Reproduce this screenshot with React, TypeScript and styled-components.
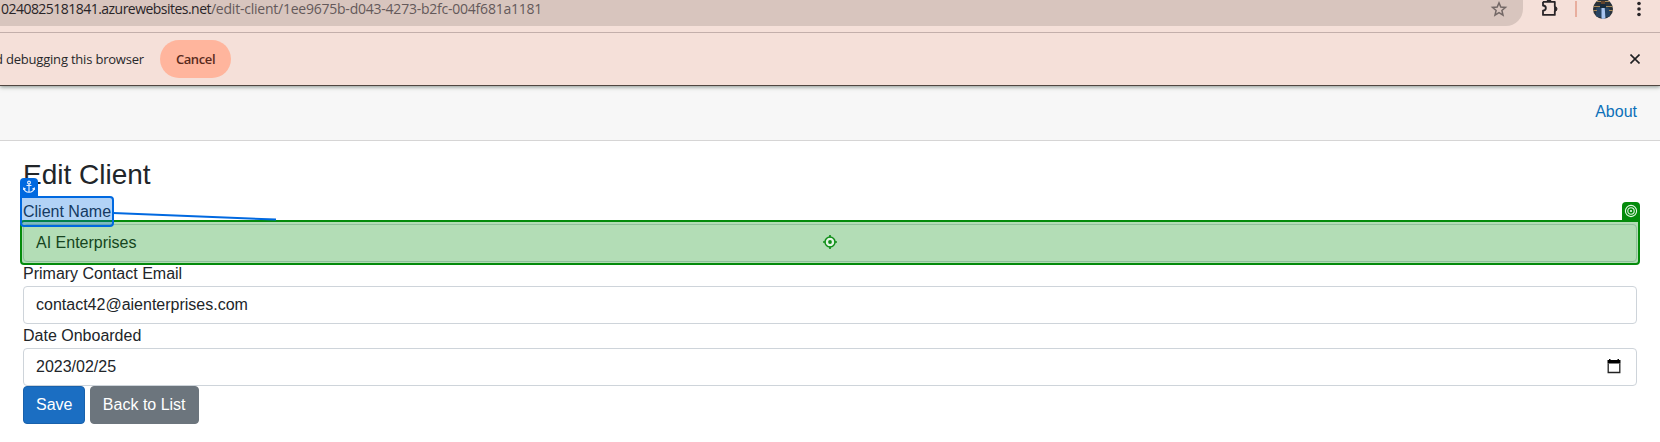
import React from "react";
import styled, { createGlobalStyle, css } from "styled-components";

const GlobalStyle = createGlobalStyle`
  *, *::before, *::after { box-sizing: border-box; }
  body {
    margin: 0;
    background: #fff;
    color: #212529;
    font: 16px/24px "Liberation Sans", Arial, sans-serif;
    overflow: hidden;
  }
`;

const Window = styled.div`
  height: 442px;
  overflow: hidden;
`;

const Toolbar = styled.header`
  display: flex;
  align-items: flex-start;
  height: 33px;
  background: #f5e0d9;
  border-bottom: 1px solid #c3afab;
`;

const AddressBar = styled.div`
  display: flex;
  justify-content: space-between;
  width: 1523px;
  height: 26px;
  padding-right: 15px;
  background: #d8c5be;
  border-bottom-right-radius: 17px;
`;

const Url = styled.span`
  padding-left: 1px;
  font: 14px/18px "Open Sans", "Noto Sans", sans-serif;
  letter-spacing: -0.53px;
  white-space: nowrap;
  color: #282427;
`;

const UrlPath = styled.span`
  color: #64595a;
  letter-spacing: -0.23px;
`;

const Icon = styled.svg`
  display: block;
  flex: none;
`;

const Actions = styled.div`
  display: flex;
  flex: 1;
  align-items: flex-start;
  padding-left: 17px;
`;

const Divider = styled.div`
  width: 2px;
  height: 16px;
  margin: 1px 16px 0 15px;
  background: #e8ae9e;
`;

const MenuDots = styled(Icon)`
  margin-left: 22px;
`;

const InfoBar = styled.div`
  position: relative;
  display: flex;
  align-items: center;
  height: 53px;
  padding-right: 20px;
  background: #f5e0d9;
  border-bottom: 1px solid #504641;
  box-shadow: 0 1px 4px rgba(60, 80, 70, 0.6);
  clip-path: inset(0 0 -8px 0);
`;

const InfoText = styled.span`
  width: 160px;
  margin-left: -5px;
  font: 13px/18px "Open Sans", "Noto Sans", sans-serif;
  letter-spacing: -0.2px;
  white-space: nowrap;
  color: #28282b;
`;

const CancelButton = styled.button`
  width: 71px;
  height: 38px;
  margin-left: 5px;
  padding: 0;
  border: 0;
  border-radius: 19px;
  background: #ffb59d;
  color: #5a2a1c;
  font: 600 13px/18px "Open Sans", "Noto Sans", sans-serif;
  letter-spacing: -0.4px;
`;

const CloseIcon = styled(Icon)`
  margin-left: auto;
`;

const TopRow = styled.nav`
  display: flex;
  align-items: center;
  justify-content: flex-end;
  height: 55px;
  padding: 0 23px 2px;
  background: #f7f7f7;
  border-bottom: 1px solid #d6d5d5;
`;

const NavLink = styled.a`
  color: #0c70b9;
`;

const Content = styled.main`
  padding: 17.4px 23px 0;
`;

const Title = styled.h3`
  margin: 0 0 8px;
  font-size: 28px;
  font-weight: 400;
  line-height: 33.6px;
`;

const Field = styled.div`
  position: relative;
`;

const Label = styled.label`
  display: block;
  height: 24px;
`;

const Control = styled.div`
  display: flex;
  align-items: center;
  justify-content: space-between;
  height: 38px;
  padding: 0 15px 0 12px;
  border: 1px solid #ced4da;
  border-radius: 4px;
  background: #fff;
`;

const ButtonRow = styled.div`
  display: flex;
  gap: 4.4px;
`;

const Button = styled.button<{ $primary?: boolean }>`
  height: 38px;
  padding: 0 12px;
  border: 1px solid ${(p) => (p.$primary ? "#1861ac" : "#6c757d")};
  border-radius: 4px;
  background: ${(p) => (p.$primary ? "#1b6ec2" : "#6c757d")};
  color: #fff;
  font: inherit;
`;

const highlight = css`
  position: absolute;
  border: 2px solid;
`;

const AnchorHighlight = styled.div`
  ${highlight}
  left: -3px;
  top: -4px;
  width: 94px;
  height: 31px;
  border-color: #0069e0;
  border-radius: 0 4px 4px 4px;
  background: rgba(0, 105, 224, 0.3);
`;

const TargetHighlight = styled.div`
  ${highlight}
  display: flex;
  align-items: center;
  justify-content: center;
  left: -3px;
  right: -3px;
  top: 20px;
  height: 45px;
  border-color: #048b0c;
  border-radius: 4px 0 4px 4px;
  background: rgba(4, 143, 12, 0.3);
`;

const Badge = styled.div<{ $side: "left" | "right"; $color: string }>`
  position: absolute;
  top: -20px;
  ${(p) => p.$side}: -2px;
  display: flex;
  align-items: center;
  justify-content: center;
  width: 18px;
  height: 19px;
  border-radius: 4px 4px 0 0;
  background: ${(p) => p.$color};
`;

const Connector = styled(Icon)`
  position: absolute;
  left: 90px;
  top: 10px;
`;

function StarIcon() {
  return (
    <Icon width="18" height="18" viewBox="0 0 18 18" fill="none" stroke="#736866" strokeWidth="1.5">
      <path d="M9 2.9 10.8 7l4.7.4-3.6 3.1 1.1 4.6L9 12.6l-4 2.5 1.1-4.6-3.6-3.1L7.2 7Z" />
    </Icon>
  );
}

function PuzzleIcon() {
  return (
    <Icon width="20" height="18" viewBox="0 0 20 18">
      <path d="M3 1.8h11.8v4.9M14.8 11v3.9H3v-4.2c3.8-.4 3.8-4.8 0-5.2V1.8" fill="none" stroke="#282427" strokeWidth="1.8" strokeLinejoin="round" />
      <path d="M14.8 6v6M14.8 6.7a2.2 2.2 0 0 1 0 4.4ZM7 1.5a2 2 0 0 1 4 0Z" fill="#282427" stroke="#282427" strokeWidth="1" />
    </Icon>
  );
}

function Avatar() {
  return (
    <Icon width="20" height="19" viewBox="0 0 20 19">
      <defs>
        <clipPath id="avatar">
          <circle cx="10" cy="9" r="10" />
        </clipPath>
      </defs>
      <g clipPath="url(#avatar)">
        <path fill="#29323a" d="M0 0h20v19H0z" />
        <path fill="#274462" d="M3 8 8 6h5l4 3v8H3z" />
        <path fill="#a98b5a" d="M0 1h8v1H0zM12 1h8v1h-8zM0 6h7v1H0zM13 6h7v1h-7zM0 10h4v1H0zM16 10h4v1h-4z" />
        <path fill="#63452d" d="M8 1h4v6H8z" />
        <path fill="#182b3b" d="M7 4h6v4H7z" />
        <path fill="#a9c5ef" d="M8.5 8h3.2l.8 11h-4z" />
      </g>
    </Icon>
  );
}

function AnchorIcon() {
  return (
    <Icon width="12" height="14" viewBox="0 0 12 14" fill="none" stroke="#e9f2ff" strokeWidth="1.1">
      <circle cx="6" cy="2.5" r="1.4" />
      <path d="M6 4v8.3M3.5 5.5h5M1 8.2c.2 2.6 2.2 4 5 4.1 2.8-.1 4.8-1.5 5-4.1M.6 10V8l2 .9M11.4 10V8l-2 .9" />
    </Icon>
  );
}

function TargetIcon() {
  return (
    <Icon width="14" height="14" viewBox="0 0 14 14" fill="none" stroke="#e4f6e5" strokeWidth="1.1">
      <circle cx="7" cy="7" r="5.6" />
      <circle cx="7" cy="7" r="3.2" />
      <circle cx="7" cy="7" r="1.1" fill="#e4f6e5" stroke="none" />
    </Icon>
  );
}

function CrosshairIcon() {
  return (
    <Icon width="14" height="14" viewBox="0 0 14 14">
      <circle cx="7" cy="7" r="5" fill="#e2f3e3" stroke="#108f18" strokeWidth="1.5" />
      <circle cx="7" cy="7" r="1.9" fill="#108f18" />
      <path d="M7 0v2.5M7 11.5V14M0 7h2.5M11.5 7H14" stroke="#108f18" strokeWidth="1.7" />
    </Icon>
  );
}

function CalendarIcon() {
  return (
    <Icon width="14" height="15" viewBox="0 0 14 15">
      <path fill="#000" d="M2 0h1.5v1h7V0H12v1h1.5v3.5H.5V1H2z" />
      <path d="M1.2 4.5v9h11.6v-9" fill="none" stroke="#222" strokeWidth="1.3" />
    </Icon>
  );
}

export default function App() {
  return (
    <Window>
      <GlobalStyle />
      <Toolbar>
        <AddressBar>
          <Url>
            0240825181841.azurewebsites.net
            <UrlPath>/edit-client/1ee9675b-d043-4273-b2fc-004f681a1181</UrlPath>
          </Url>
          <StarIcon />
        </AddressBar>
        <Actions>
          <PuzzleIcon />
          <Divider />
          <Avatar />
          <MenuDots width="8" height="18" viewBox="0 0 8 18" fill="#282427">
            <circle cx="4" cy="3.5" r="1.8" />
            <circle cx="4" cy="9" r="1.8" />
            <circle cx="4" cy="14.5" r="1.8" />
          </MenuDots>
        </Actions>
      </Toolbar>
      <InfoBar>
        <InfoText>d debugging this browser</InfoText>
        <CancelButton>Cancel</CancelButton>
        <CloseIcon width="10" height="10" viewBox="0 0 10 10" stroke="#202124" strokeWidth="1.6">
          <path d="m.5.5 9 9m0-9-9 9" />
        </CloseIcon>
      </InfoBar>
      <TopRow>
        <NavLink>About</NavLink>
      </TopRow>
      <Content>
        <Title>Edit Client</Title>
        <Field>
          <Label>Client Name</Label>
          <Control>AI Enterprises</Control>
          <TargetHighlight>
            <Badge $side="right" $color="#048b0c">
              <TargetIcon />
            </Badge>
            <CrosshairIcon />
          </TargetHighlight>
          <AnchorHighlight>
            <Badge $side="left" $color="#0069e0">
              <AnchorIcon />
            </Badge>
          </AnchorHighlight>
          <Connector width="165" height="12" viewBox="0 0 165 12">
            <path d="M0 3 163 9.6" stroke="#0069e0" strokeWidth="2" />
          </Connector>
        </Field>
        <Field>
          <Label>Primary Contact Email</Label>
          <Control>contact42@aienterprises.com</Control>
        </Field>
        <Field>
          <Label>Date Onboarded</Label>
          <Control>
            2023/02/25
            <CalendarIcon />
          </Control>
        </Field>
        <ButtonRow>
          <Button $primary>Save</Button>
          <Button>Back to List</Button>
        </ButtonRow>
      </Content>
    </Window>
  );
}
